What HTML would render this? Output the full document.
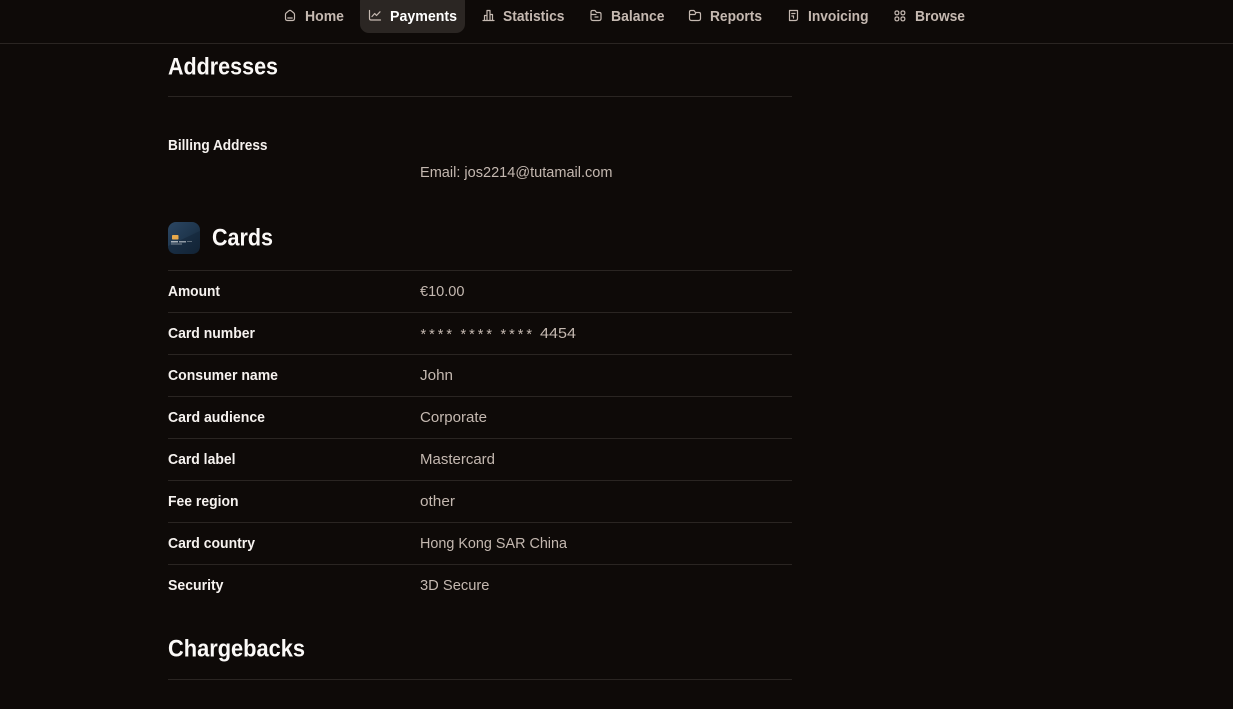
<!DOCTYPE html>
<html lang="en">
<head>
<meta charset="utf-8">
<title>Payment details</title>
<style>
html,body{margin:0;padding:0;background:#0e0a08;width:1233px;height:709px;overflow:hidden}
svg{display:block;position:absolute;left:0;top:0}
text{font-family:"Liberation Sans",sans-serif}
.n{font-size:14.5px;font-weight:700;fill:#c5b9b1}
.a{fill:#fff}
.h{font-size:24px;font-weight:700;fill:#fbf9f7}
.k{font-size:14.5px;font-weight:700;fill:#f6f2ef}
.v{font-size:14.5px;fill:#c4b8b0}
.l{fill:#2a2522}
.i{fill:none;stroke:#c5b9b1;stroke-width:1.2;stroke-linecap:round;stroke-linejoin:round}
</style>
</head>
<body>
<svg width="1233" height="709" viewBox="0 0 1233 709" xmlns="http://www.w3.org/2000/svg">
<defs>
<linearGradient id="card" x1="0" y1="0" x2="1" y2="1">
<stop offset="0" stop-color="#2c4763"/>
<stop offset=".55" stop-color="#1e354c"/>
<stop offset="1" stop-color="#101e2c"/>
</linearGradient>
</defs>
<rect width="1233" height="709" fill="#0e0a08"/>

<rect x="360" y="-8" width="105" height="41" rx="9" fill="#2b2623"/>
<rect x="0" y="43" width="1233" height="1" class="l"/>

<path class="i" d="M285.500 14.500Q285.500 13.500 286.300 12.900L289 10.700Q290 10 291 10.700L293.700 12.900Q294.500 13.500 294.500 14.500V18.500Q294.500 20.500 292.500 20.500H287.500Q285.500 20.500 285.500 18.500ZM287.800 18H292.200"/>
<path class="i" d="M369.500 10.500V18.500Q369.500 20 371 20H380.500M372 16.500 374.700 13.500 376.500 15.500 380 11.800"/>
<path class="i" d="M483 20.500H494M484.500 20.500V15.500H487V20.500M487 20.500V10.500H490V20.500M490 20.500V14.500H492.500V20.500"/>
<path class="i" d="M591 12Q591 10.500 592.500 10.500H595L596.500 12.500H599.500Q601 12.500 601 14V18.500Q601 20.500 599 20.500H593Q591 20.500 591 18.500ZM591 14.500H596M595 17H598"/>
<path class="i" d="M689.500 12Q689.500 10.500 691 10.500H694L695.500 12.500H699Q700.500 12.500 700.500 14V18.500Q700.500 20.500 698.500 20.500H691.500Q689.500 20.500 689.500 18.500ZM689.500 14.500H695L696 12.500"/>
<path class="i" d="M789.500 10.500H797.500V18.500Q797.500 20.500 795.500 20.500H789.500ZM791.800 13.500H795M791.800 16H793.500V18"/>
<rect class="i" x="895" y="11" width="3.800" height="3.800" rx="1.500"/><rect class="i" x="901" y="11" width="3.800" height="3.800" rx="1.500"/><rect class="i" x="895" y="17" width="3.800" height="3.800" rx="1.500"/><rect class="i" x="901" y="17" width="3.800" height="3.800" rx="1.500"/>

<text class="n" x="305" y="21" textLength="39" lengthAdjust="spacingAndGlyphs">Home</text>
<text class="n a" x="390" y="21" textLength="67" lengthAdjust="spacingAndGlyphs">Payments</text>
<text class="n" x="503" y="21" textLength="61.500" lengthAdjust="spacingAndGlyphs">Statistics</text>
<text class="n" x="611" y="21" textLength="53.500" lengthAdjust="spacingAndGlyphs">Balance</text>
<text class="n" x="710" y="21" textLength="52" lengthAdjust="spacingAndGlyphs">Reports</text>
<text class="n" x="808" y="21" textLength="60.500" lengthAdjust="spacingAndGlyphs">Invoicing</text>
<text class="n" x="915" y="21" textLength="50" lengthAdjust="spacingAndGlyphs">Browse</text>

<text class="h" x="168" y="74.500" textLength="110" lengthAdjust="spacingAndGlyphs">Addresses</text>
<rect x="168" y="96" width="624" height="1" class="l"/>
<text class="k" x="168" y="150" textLength="99.500" lengthAdjust="spacingAndGlyphs">Billing Address</text>
<text class="v" x="420" y="177" textLength="192.500" lengthAdjust="spacingAndGlyphs">Email: jos2214@tutamail.com</text>

<rect x="168" y="222" width="32" height="32" rx="8" fill="url(#card)"/>
<path d="M168 246 200 231V246Q200 254 192 254H176Q168 254 168 246Z" fill="#14263a" opacity=".6"/>
<rect x="172" y="235" width="6.500" height="4.500" rx=".8" fill="#e8a94a"/>
<rect x="171" y="241" width="7" height="1.500" fill="#a9b2ba"/>
<rect x="179" y="241" width="7" height="1.500" fill="#8f9aa5"/>
<rect x="187" y="241" width="5" height="1" fill="#5f6d7a"/>
<rect x="171" y="243.500" width="11" height="1" fill="#7c8893"/>
<text class="h" x="212" y="245.500" textLength="61" lengthAdjust="spacingAndGlyphs">Cards</text>

<rect x="168" y="270" width="624" height="1" class="l"/>
<rect x="168" y="312" width="624" height="1" class="l"/>
<rect x="168" y="354" width="624" height="1" class="l"/>
<rect x="168" y="396" width="624" height="1" class="l"/>
<rect x="168" y="438" width="624" height="1" class="l"/>
<rect x="168" y="480" width="624" height="1" class="l"/>
<rect x="168" y="522" width="624" height="1" class="l"/>
<rect x="168" y="564" width="624" height="1" class="l"/>

<text class="k" x="168" y="296" textLength="52" lengthAdjust="spacingAndGlyphs">Amount</text>
<text class="v" x="420" y="296" textLength="44.500" lengthAdjust="spacingAndGlyphs">€10.00</text>
<text class="k" x="168" y="338" textLength="87" lengthAdjust="spacingAndGlyphs">Card number</text>
<text class="v" x="420.500" y="339" letter-spacing="3">**** </text>
<text class="v" x="460.500" y="339" letter-spacing="3">**** </text>
<text class="v" x="500.500" y="339" letter-spacing="3">****</text>
<text class="v" x="540" y="338" textLength="36" lengthAdjust="spacingAndGlyphs">4454</text>
<text class="k" x="168" y="380" textLength="110" lengthAdjust="spacingAndGlyphs">Consumer name</text>
<text class="v" x="420" y="380" textLength="33" lengthAdjust="spacingAndGlyphs">John</text>
<text class="k" x="168" y="422" textLength="97" lengthAdjust="spacingAndGlyphs">Card audience</text>
<text class="v" x="420" y="422" textLength="67" lengthAdjust="spacingAndGlyphs">Corporate</text>
<text class="k" x="168" y="464" textLength="67.500" lengthAdjust="spacingAndGlyphs">Card label</text>
<text class="v" x="420" y="464" textLength="75" lengthAdjust="spacingAndGlyphs">Mastercard</text>
<text class="k" x="168" y="506" textLength="70.500" lengthAdjust="spacingAndGlyphs">Fee region</text>
<text class="v" x="420" y="506" textLength="35" lengthAdjust="spacingAndGlyphs">other</text>
<text class="k" x="168" y="548" textLength="87" lengthAdjust="spacingAndGlyphs">Card country</text>
<text class="v" x="420" y="548" textLength="147" lengthAdjust="spacingAndGlyphs">Hong Kong SAR China</text>
<text class="k" x="168" y="590" textLength="55.500" lengthAdjust="spacingAndGlyphs">Security</text>
<text class="v" x="420" y="590" textLength="69.500" lengthAdjust="spacingAndGlyphs">3D Secure</text>

<text class="h" x="168" y="656.500" textLength="137" lengthAdjust="spacingAndGlyphs">Chargebacks</text>
<rect x="168" y="679" width="624" height="1" class="l"/>
</svg>
</body>
</html>
